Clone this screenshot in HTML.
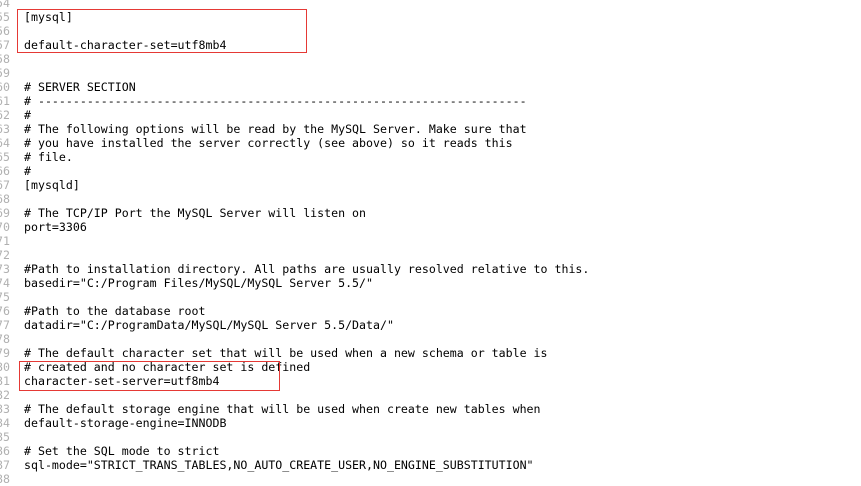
<!DOCTYPE html>
<html><head><style>
html,body{margin:0;padding:0;background:#fff;width:861px;height:482px;overflow:hidden}
pre{margin:0;position:absolute;font-family:"DejaVu Sans Mono","Liberation Mono",monospace;font-size:11.6px;line-height:14px}
#nums{left:-4px;top:-4px;color:#b0b0b0}
#code{left:24px;top:-4px;color:#000}
.box{position:absolute;border:1px solid #e53935}
</style></head><body>
<pre id="nums">54
55
56
57
58
59
60
61
62
63
64
65
66
67
68
69
70
71
72
73
74
75
76
77
78
79
80
81
82
83
84
85
86
87
88</pre>
<pre id="code">

[mysql]

default-character-set=utf8mb4


# SERVER SECTION
# ----------------------------------------------------------------------
#
# The following options will be read by the MySQL Server. Make sure that
# you have installed the server correctly (see above) so it reads this 
# file.
#
[mysqld]

# The TCP/IP Port the MySQL Server will listen on
port=3306


#Path to installation directory. All paths are usually resolved relative to this.
basedir="C:/Program Files/MySQL/MySQL Server 5.5/"

#Path to the database root
datadir="C:/ProgramData/MySQL/MySQL Server 5.5/Data/"

# The default character set that will be used when a new schema or table is
# created and no character set is defined
character-set-server=utf8mb4

# The default storage engine that will be used when create new tables when
default-storage-engine=INNODB

# Set the SQL mode to strict
sql-mode="STRICT_TRANS_TABLES,NO_AUTO_CREATE_USER,NO_ENGINE_SUBSTITUTION"
</pre>
<div class="box" style="left:17px;top:9px;width:288px;height:42px"></div>
<div class="box" style="left:19px;top:361px;width:259px;height:28px"></div>
</body></html>
